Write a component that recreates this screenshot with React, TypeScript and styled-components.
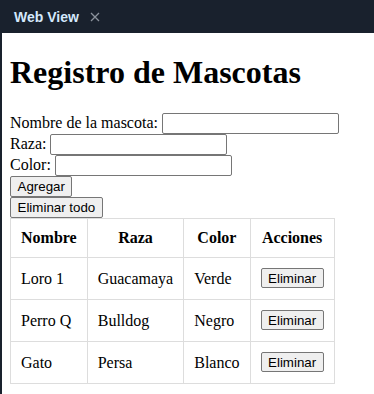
import React from "react";
import styled, { createGlobalStyle } from "styled-components";

const Global = createGlobalStyle`
  html, body { margin: 0; padding: 0; background: #ffffff; }
  #root { width: 374px; height: 394px; }
`;

const Page = styled.div`
  width: 374px;
  height: 394px;
  display: flex;
  flex-direction: column;
  overflow: hidden;
`;

const TabBar = styled.div`
  height: 33px;
  flex: 0 0 33px;
  background: #19212d;
  display: flex;
  align-items: center;
  padding-left: 14px;
  gap: 11px;
`;

const TabTitle = styled.span`
  font-family: "Liberation Sans", Arial, sans-serif;
  font-weight: 700;
  font-size: 14px;
  color: #d4e8fb;
  line-height: 1;
  margin-top: 1px;
`;

const CloseIcon = styled.svg`
  width: 10px;
  height: 10px;
  margin-top: 1px;
`;

const Frame = styled.div`
  flex: 1;
  border-left: 2px solid #19212d;
  background: #ffffff;
  padding: 0 8px;
  display: flow-root;
  font-family: "Liberation Serif", "Times New Roman", serif;
  font-size: 16px;
  color: #000;
`;

const Title = styled.h1`
  font-family: "Liberation Serif", "Times New Roman", serif;
  font-size: 32px;
  font-weight: 700;
  margin: 21.44px 0;
  line-height: 37px;
`;

const Row = styled.div`
  display: flex;
  align-items: center;
  height: 21px;
  gap: 4px;
  white-space: nowrap;
`;

const Field = styled.input`
  box-sizing: border-box;
  width: 177px;
  height: 21px;
  border: 1px solid #767676;
  border-radius: 2px;
  padding: 1px 2px;
  font-family: "Liberation Sans", Arial, sans-serif;
  font-size: 13.33px;
  background: #fff;
  margin: 0;
`;

const Button = styled.button`
  box-sizing: border-box;
  height: 21px;
  padding: 0 6.5px;
  border: 1px solid #767676;
  border-radius: 2px;
  background: #efefef;
  font-family: "Liberation Sans", Arial, sans-serif;
  font-size: 13.33px;
  color: #000;
  line-height: 1;
  margin: 0;
`;

const ButtonRow = styled.div`
  display: flex;
  height: 21px;
  align-items: center;
`;

const Table = styled.table`
  border-collapse: collapse;
  margin-top: 0;
`;

const Th = styled.th`
  border: 1px solid #dddddd;
  padding: 10px;
  font-weight: 700;
  text-align: center;
  line-height: 18px;
`;

const Td = styled.td`
  border: 1px solid #dddddd;
  padding: 10px;
  text-align: left;
  line-height: 21px;
  height: 21px;
  white-space: nowrap;
`;

const RowButton = styled(Button)`
  display: block;
  height: 20px;
`;

const pets = [
  { nombre: "Loro 1", raza: "Guacamaya", color: "Verde" },
  { nombre: "Perro Q", raza: "Bulldog", color: "Negro" },
  { nombre: "Gato", raza: "Persa", color: "Blanco" },
];

export default function App() {
  return (
    <Page>
      <Global />
      <TabBar>
        <TabTitle>Web View</TabTitle>
        <CloseIcon viewBox="0 0 10 10">
          <path d="M1 1 L9 9 M9 1 L1 9" stroke="#8b929c" strokeWidth="1.3" fill="none" />
        </CloseIcon>
      </TabBar>
      <Frame>
        <Title>Registro de Mascotas</Title>
        <Row>
          <span>Nombre de la mascota:</span>
          <Field type="text" />
        </Row>
        <Row>
          <span>Raza:</span>
          <Field type="text" />
        </Row>
        <Row>
          <span>Color:</span>
          <Field type="text" />
        </Row>
        <ButtonRow>
          <Button>Agregar</Button>
        </ButtonRow>
        <ButtonRow>
          <Button>Eliminar todo</Button>
        </ButtonRow>
        <Table>
          <thead>
            <tr>
              <Th>Nombre</Th>
              <Th>Raza</Th>
              <Th>Color</Th>
              <Th>Acciones</Th>
            </tr>
          </thead>
          <tbody>
            {pets.map((p) => (
              <tr key={p.nombre}>
                <Td>{p.nombre}</Td>
                <Td>{p.raza}</Td>
                <Td>{p.color}</Td>
                <Td>
                  <RowButton>Eliminar</RowButton>
                </Td>
              </tr>
            ))}
          </tbody>
        </Table>
      </Frame>
    </Page>
  );
}
